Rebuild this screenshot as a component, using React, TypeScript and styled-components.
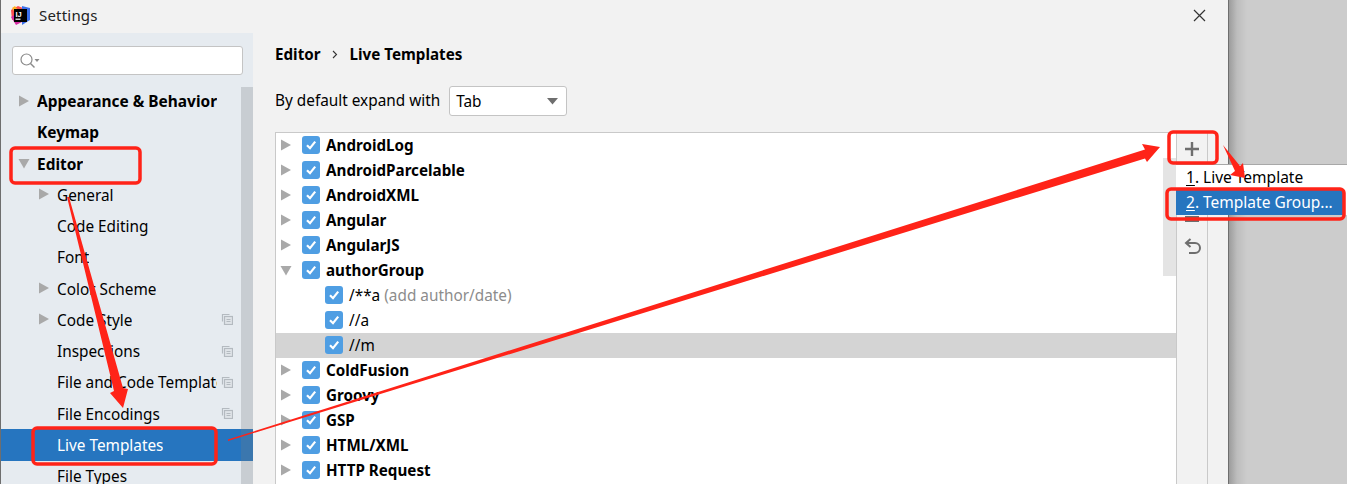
import styled, { createGlobalStyle } from "styled-components";

const GlobalStyles = createGlobalStyle`
  html, body {
    margin: 0;
    padding: 0;
    background: #cccccc;
  }
  body {
    font-family: "Noto Sans", "Open Sans", sans-serif;
    font-size: 15.35px;
    color: #000;
  }
`;

const Page = styled.div`
  position: relative;
  display: flex;
  width: 1347px;
  height: 484px;
  overflow: hidden;
`;

const Dialog = styled.div`
  width: 1227px;
  height: 484px;
  flex-shrink: 0;
  display: flex;
  flex-direction: column;
  background: #f2f2f2;
  border-left: 1px solid #6e6e6e;
  border-right: 1px solid #6e6e6e;
`;

const Backdrop = styled.div`
  flex: 1;
  background: linear-gradient(90deg, #9c9c9c 0, #bdbdbd 8px, #cccccc 18px);
`;

const TitleBar = styled.div`
  height: 33px;
  box-sizing: border-box;
  flex-shrink: 0;
  display: flex;
  align-items: center;
  gap: 8px;
  padding: 0 22px 3px 9px;
  font-size: 15px;
  color: #222;
`;

const TitleText = styled.span`
  flex: 1;
  letter-spacing: 0.2px;
`;

const Body = styled.div`
  flex: 1;
  display: flex;
  min-height: 0;
`;

const Sidebar = styled.div`
  position: relative;
  width: 252px;
  flex-shrink: 0;
  background: #e6ebf0;
  display: flex;
  flex-direction: column;
  overflow: hidden;
`;

const SearchBox = styled.div`
  height: 27px;
  margin: 13px 10px 10.5px 11px;
  flex-shrink: 0;
  background: #fff;
  border: 1px solid #c4c4c4;
  border-radius: 3px;
  display: flex;
  align-items: center;
  padding-left: 6px;
`;

const NavRow = styled.div<{ $depth: number; $selected?: boolean; $bold?: boolean }>`
  height: 31.25px;
  flex-shrink: 0;
  display: flex;
  align-items: center;
  padding-left: ${(p) => (p.$depth === 0 ? 36 : 56)}px;
  position: relative;
  background: ${(p) => (p.$selected ? "#2675bf" : "transparent")};
  color: ${(p) => (p.$selected ? "#fff" : "#000")};
  font-weight: ${(p) => (p.$bold ? 700 : 400)};
  font-size: ${(p) => (p.$bold ? 15.45 : 15.35)}px;
`;

const NavLabel = styled.span<{ $depth: number }>`
  max-width: ${(p) => (p.$depth === 0 ? 200 : 160)}px;
  overflow: hidden;
  white-space: nowrap;
`;

const NavCaret = styled.span<{ $depth: number }>`
  position: absolute;
  left: ${(p) => (p.$depth === 0 ? 17 : 37)}px;
  top: 9px;
  display: flex;
`;

const NavBadge = styled.span`
  position: absolute;
  left: 220px;
  top: 9px;
  display: flex;
`;

const SideScroll = styled.div`
  position: absolute;
  right: 0;
  top: 54px;
  bottom: 0;
  width: 12px;
  background: rgba(120, 125, 130, 0.27);
`;

const Main = styled.div`
  flex: 1;
  display: flex;
  flex-direction: column;
  padding-left: 22px;
  min-width: 0;
`;

const Crumbs = styled.div`
  height: 42px;
  display: flex;
  align-items: center;
  font-weight: 700;
  font-size: 15.2px;
  flex-shrink: 0;
`;

const CrumbSep = styled.span`
  display: flex;
  width: 29px;
  justify-content: center;
  padding-right: 1px;
  box-sizing: border-box;
`;

const ExpandRow = styled.div`
  height: 30px;
  margin-top: 11px;
  display: flex;
  align-items: center;
  gap: 9px;
  flex-shrink: 0;
`;

const ExpandLabel = styled.span`
  padding-bottom: 2px;
`;

const Select = styled.div`
  width: 118px;
  height: 30px;
  box-sizing: border-box;
  background: #fff;
  border: 1px solid #c4c4c4;
  border-radius: 3px;
  display: flex;
  align-items: center;
  justify-content: space-between;
  padding: 0 8px 0 6px;
`;

const Content = styled.div`
  flex: 1;
  margin-top: 16px;
  display: flex;
  min-height: 0;
`;

const Tree = styled.div`
  position: relative;
  width: 900px;
  flex-shrink: 0;
  background: #fff;
  border-top: 1px solid #c9c9c9;
  border-left: 1px solid #c9c9c9;
  overflow: hidden;
`;

const TreeRow = styled.div<{ $child?: boolean; $selected?: boolean }>`
  position: relative;
  height: 25px;
  box-sizing: border-box;
  padding-bottom: 1px;
  display: flex;
  align-items: center;
  gap: 6px;
  padding-left: ${(p) => (p.$child ? 49 : 26)}px;
  background: ${(p) => (p.$selected ? "#d4d4d4" : "transparent")};
  font-weight: ${(p) => (p.$child ? 400 : 700)};
  font-size: ${(p) => (p.$child ? 15.35 : 15.2)}px;
  white-space: nowrap;
`;

const TreeCaret = styled.span`
  position: absolute;
  left: 4px;
  top: 6px;
  display: flex;
`;

const TreeLabel = styled.span`
  padding-bottom: 1px;
`;

const Check = styled.span`
  width: 18px;
  height: 18px;
  border-radius: 3px;
  background: #4f9ee3;
  display: flex;
  align-items: center;
  justify-content: center;
  flex-shrink: 0;
`;

const Hint = styled.span`
  color: #8c8c8c;
`;

const TreeScroll = styled.div`
  position: absolute;
  right: 0;
  top: 25px;
  width: 13px;
  height: 118px;
  background: #e4e4e4;
`;

const Toolbar = styled.div`
  width: 30px;
  flex-shrink: 0;
  border-left: 1px solid #c9c9c9;
  border-right: 1px solid #c9c9c9;
  display: flex;
  flex-direction: column;
  align-items: center;
`;

const ToolButton = styled.span<{ $top: number }>`
  display: flex;
  margin-top: ${(p) => p.$top}px;
`;

const Popup = styled.div`
  position: absolute;
  left: 1176px;
  top: 164px;
  width: 171px;
  background: #fff;
  border-top: 1px solid #a8a8a8;
  z-index: 2;
`;

const PopupItem = styled.div<{ $active?: boolean }>`
  height: 25px;
  box-sizing: border-box;
  padding: 0 0 1px 10px;
  display: flex;
  align-items: center;
  margin-right: 3px;
  font-size: 15.5px;
  background: ${(p) => (p.$active ? "#2675bf" : "#fff")};
  color: ${(p) => (p.$active ? "#fff" : "#000")};
  white-space: pre;
  u {
    text-underline-offset: 2px;
  }
`;

const Annotations = styled.svg`
  position: absolute;
  left: 0;
  top: 0;
  z-index: 3;
  pointer-events: none;
`;

const RED = "#ff2318";

function Triangle({ down }: { down?: boolean }) {
  return (
    <svg width="12" height="12" viewBox="0 0 12 12">
      {down ? (
        <path d="M0.5 2h11L6 11.5z" fill="#a9a9a9" />
      ) : (
        <path d="M1 0.5v11L11 6z" fill="#a9a9a9" />
      )}
    </svg>
  );
}

function CopyBadge() {
  return (
    <svg width="12" height="12" viewBox="0 0 12 12" fill="none" stroke="#b4bac0">
      <path d="M8.5 1.5h-7v7" strokeWidth="1.2" />
      <rect x="3.5" y="3.5" width="8" height="8" fill="#dfe4e8" strokeWidth="1.2" />
      <path d="M5.5 6.5h4M5.5 8.5h4" strokeWidth="1" />
    </svg>
  );
}

function Tick() {
  return (
    <svg width="12" height="12" viewBox="0 0 12 12">
      <path d="M2 6.2l3 3 5.2-6.6" fill="none" stroke="#fff" strokeWidth="2.2" />
    </svg>
  );
}

function IdeaLogo() {
  return (
    <svg width="21" height="21" viewBox="0 0 21 21">
      <path d="M1 5L8 1l5 2-3 9-8 3z" fill="#fc4f4f" />
      <path d="M1 12l5 8 6-3-6-8z" fill="#d62da4" />
      <path d="M12 1l8 2 0 12-8 5z" fill="#3a6fea" />
      <path d="M2 3l3-2 3 4-3 3z" fill="#ffb21f" />
      <rect x="4" y="4" width="13" height="13" fill="#000" />
      <rect x="5.5" y="13.6" width="5" height="1.2" fill="#fff" />
      <text
        x="5.4"
        y="11.6"
        fill="#fff"
        fontSize="7.5"
        fontWeight="700"
        fontFamily="Liberation Sans, sans-serif"
      >
        IJ
      </text>
    </svg>
  );
}

const navItems = [
  { label: "Appearance & Behavior", depth: 0, bold: true, caret: "right" },
  { label: "Keymap", depth: 0, bold: true },
  { label: "Editor", depth: 0, bold: true, caret: "down" },
  { label: "General", depth: 1, caret: "right" },
  { label: "Code Editing", depth: 1 },
  { label: "Font", depth: 1 },
  { label: "Color Scheme", depth: 1, caret: "right" },
  { label: "Code Style", depth: 1, caret: "right", badge: true },
  { label: "Inspections", depth: 1, badge: true },
  { label: "File and Code Templates", depth: 1, badge: true },
  { label: "File Encodings", depth: 1, badge: true },
  { label: "Live Templates", depth: 1, selected: true },
  { label: "File Types", depth: 1 },
];

const treeItems = [
  { label: "AndroidLog" },
  { label: "AndroidParcelable" },
  { label: "AndroidXML" },
  { label: "Angular" },
  { label: "AngularJS" },
  { label: "authorGroup", open: true },
  { label: "/**a", hint: "(add author/date)", child: true },
  { label: "//a", child: true },
  { label: "//m", child: true, selected: true },
  { label: "ColdFusion" },
  { label: "Groovy" },
  { label: "GSP" },
  { label: "HTML/XML" },
  { label: "HTTP Request" },
];

export default function App() {
  return (
    <>
      <GlobalStyles />
      <Page>
        <Dialog>
          <TitleBar>
            <IdeaLogo />
            <TitleText>Settings</TitleText>
            <svg width="13" height="13" viewBox="0 0 13 13">
              <path d="M1 1l11 11M12 1L1 12" stroke="#333" strokeWidth="1.2" />
            </svg>
          </TitleBar>
          <Body>
            <Sidebar>
              <SearchBox>
                <svg width="22" height="18" viewBox="0 0 22 18" fill="none">
                  <circle cx="7.5" cy="7.5" r="5.5" stroke="#8a8a8a" strokeWidth="1.2" />
                  <path d="M11.5 11.5l4 4" stroke="#8a8a8a" strokeWidth="1.5" />
                  <path d="M15.5 7h5l-2.5 3z" fill="#8a8a8a" />
                </svg>
              </SearchBox>
              {navItems.map((item) => (
                <NavRow
                  key={item.label}
                  $depth={item.depth}
                  $bold={item.bold}
                  $selected={item.selected}
                >
                  {item.caret && (
                    <NavCaret $depth={item.depth}>
                      <Triangle down={item.caret === "down"} />
                    </NavCaret>
                  )}
                  <NavLabel $depth={item.depth}>{item.label}</NavLabel>
                  {item.badge && (
                    <NavBadge>
                      <CopyBadge />
                    </NavBadge>
                  )}
                </NavRow>
              ))}
              <SideScroll />
            </Sidebar>
            <Main>
              <Crumbs>
                <span>Editor</span>
                <CrumbSep>
                  <svg width="6" height="9" viewBox="0 0 6 9">
                    <path d="M1 1l3.5 3.5L1 8" fill="none" stroke="#333" strokeWidth="1.1" />
                  </svg>
                </CrumbSep>
                <span>Live Templates</span>
              </Crumbs>
              <ExpandRow>
                <ExpandLabel>By default expand with</ExpandLabel>
                <Select>
                  <span>Tab</span>
                  <svg width="11" height="7" viewBox="0 0 11 7">
                    <path d="M0 0h11L5.5 6.5z" fill="#6e6e6e" />
                  </svg>
                </Select>
              </ExpandRow>
              <Content>
                <Tree>
                  {treeItems.map((item) => (
                    <TreeRow key={item.label} $child={item.child} $selected={item.selected}>
                      {!item.child && (
                        <TreeCaret>
                          <Triangle down={item.open} />
                        </TreeCaret>
                      )}
                      <Check>
                        <Tick />
                      </Check>
                      <TreeLabel>
                        {item.label} {item.hint && <Hint>{item.hint}</Hint>}
                      </TreeLabel>
                    </TreeRow>
                  ))}
                  <TreeScroll />
                </Tree>
                <Toolbar>
                  <ToolButton $top={10}>
                    <svg width="14" height="14" viewBox="0 0 14 14">
                      <path d="M7 0v14M0 7h14" stroke="#6e6e6e" strokeWidth="2.4" />
                    </svg>
                  </ToolButton>
                  <ToolButton $top={56}>
                    <svg width="14" height="14" viewBox="0 0 14 14">
                      <path d="M0 7h14" stroke="#6e6e6e" strokeWidth="6" />
                    </svg>
                  </ToolButton>
                  <ToolButton $top={12}>
                    <svg width="17" height="17" viewBox="0 0 17 17" fill="none">
                      <path d="M3 5h8a4.5 4.5 0 0 1 0 10H5" stroke="#6e6e6e" strokeWidth="2" />
                      <path d="M6.5 1L2 5l4.5 4" stroke="#6e6e6e" strokeWidth="2" />
                    </svg>
                  </ToolButton>
                </Toolbar>
              </Content>
            </Main>
          </Body>
        </Dialog>
        <Backdrop />
        <Popup>
          <PopupItem>
            <u>1</u>. Live Template
          </PopupItem>
          <PopupItem $active>
            <u>2</u>. Template Group...
          </PopupItem>
        </Popup>
        <Annotations width="1347" height="484" viewBox="0 0 1347 484">
          <g fill="none" stroke={RED} strokeWidth="3.5">
            <rect x="11" y="148" width="129" height="35" rx="4" />
            <rect x="33" y="428" width="183" height="36" rx="4" />
            <rect x="1169" y="132" width="48" height="31" rx="4" />
            <rect x="1167" y="189" width="177" height="30" rx="4" />
          </g>
          <g fill={RED}>
            <path d="M67 197L69 197 123 388 128 389 123 408 110 393 114 391z" />
            <path d="M228 439.5L1145 149.5 1142 144 1160 147 1147 162 1145 158.5 228 441z" />
            <path d="M1223 145L1240 166 1243 163 1245 178 1230 175 1235 171z" />
          </g>
        </Annotations>
      </Page>
    </>
  );
}
